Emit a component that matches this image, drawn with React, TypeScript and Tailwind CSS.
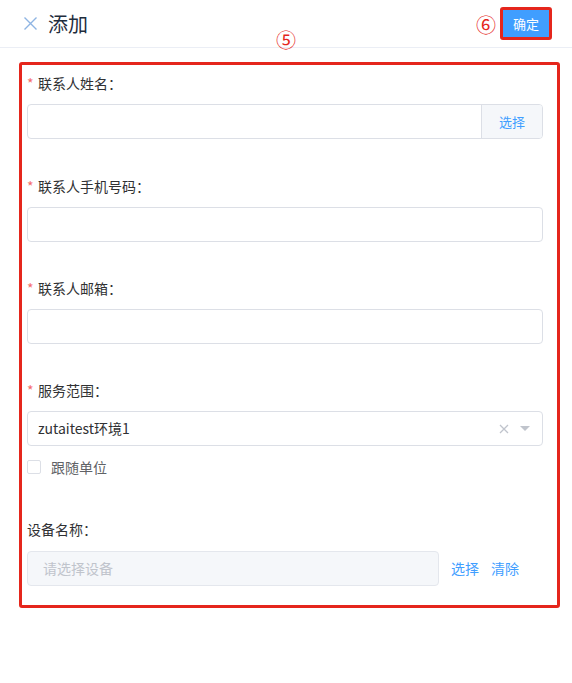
import React from 'react';

const font = { fontFamily: '"Noto Sans CJK SC", "Liberation Sans", sans-serif' };

const Label: React.FC<{ text: string; required?: boolean; className?: string }> = ({ text, required, className = '' }) => (
  <div className={`h-[22px] flex items-center text-[14px] text-[#303133] leading-none ${className}`}>
    {required && <span className="text-[#f56c6c] mr-[4px] w-[7px]">*</span>}
    <span>{text}：</span>
  </div>
);

const App: React.FC = () => {
  return (
    <div className="relative w-[572px] h-[683px] bg-white" style={font}>
      {/* header */}
      <div className="h-[48px] border-b border-[#ebeef5] flex items-center pl-[23px] pr-[20px]">
        <svg width="15" height="15" viewBox="0 0 15 15" className="shrink-0">
          <path d="M1.5 1.5 L13.5 13.5 M13.5 1.5 L1.5 13.5" stroke="#8eb4e3" strokeWidth="1.4" fill="none" />
        </svg>
        <span className="ml-[10px] text-[20px] text-[#1f2d3d] leading-none">添加</span>
        <span className="ml-auto mr-[4px] text-[20px] text-[#e5261c] leading-none mt-[3px]">⑥</span>
        <div className="border-[3px] border-[#e5261c] rounded-[3px]">
          <button className="w-[46px] h-[27px] bg-[#409eff] text-white text-[13px] leading-none flex items-center justify-center">
            确定
          </button>
        </div>
      </div>

      {/* annotation */}
      <span className="absolute left-[276px] top-[30px] text-[20px] text-[#e5261c] leading-none">⑤</span>

      {/* form */}
      <div className="mt-[14px] ml-[19px] w-[541px] border-[3px] border-[#e5261c] rounded-[3px] pl-[5px] pr-[14px] pt-[7px] pb-[19px]">
        <Label text="联系人姓名" required />
        <div className="mt-[10px] h-[35px] flex border border-[#dcdfe6] rounded-[4px] overflow-hidden">
          <div className="flex-1" />
          <div className="w-[61px] bg-[#f5f7fa] border-l border-[#dcdfe6] flex items-center justify-center text-[13px] text-[#409eff]">
            选择
          </div>
        </div>

        <Label text="联系人手机号码" required className="mt-[36px]" />
        <div className="mt-[10px] h-[35px] border border-[#dcdfe6] rounded-[4px]" />

        <Label text="联系人邮箱" required className="mt-[35px]" />
        <div className="mt-[10px] h-[35px] border border-[#dcdfe6] rounded-[4px]" />

        <Label text="服务范围" required className="mt-[35px]" />
        <div className="mt-[10px] h-[35px] border border-[#dcdfe6] rounded-[4px] flex items-center pl-[10px] pr-[12px]">
          <span className="text-[14px] text-[#303133]">zutaitest环境1</span>
          <svg width="10" height="10" viewBox="0 0 10 10" className="ml-auto">
            <path d="M1 1 L9 9 M9 1 L1 9" stroke="#c0c4cc" strokeWidth="1.3" fill="none" />
          </svg>
          <svg width="10" height="6" viewBox="0 0 10 6" className="ml-[11px]">
            <path d="M0 0 L10 0 L5 5 Z" fill="#c0c4cc" />
          </svg>
        </div>
        <div className="mt-[11px] h-[20px] flex items-center">
          <span className="w-[14px] h-[14px] border border-[#dcdfe6] rounded-[2px] bg-white" />
          <span className="ml-[10px] text-[14px] text-[#606266]">跟随单位</span>
        </div>

        <Label text="设备名称" className="mt-[41px]" />
        <div className="mt-[11px] flex items-center">
          <div className="w-[412px] h-[35px] bg-[#f5f7fa] border border-[#e4e7ed] rounded-[4px] flex items-center pl-[15px] text-[14px] text-[#c0c4cc]">
            请选择设备
          </div>
          <span className="ml-[12px] text-[14px] text-[#409eff]">选择</span>
          <span className="ml-[12px] text-[14px] text-[#409eff]">清除</span>
        </div>
      </div>
    </div>
  );
};

export default App;
